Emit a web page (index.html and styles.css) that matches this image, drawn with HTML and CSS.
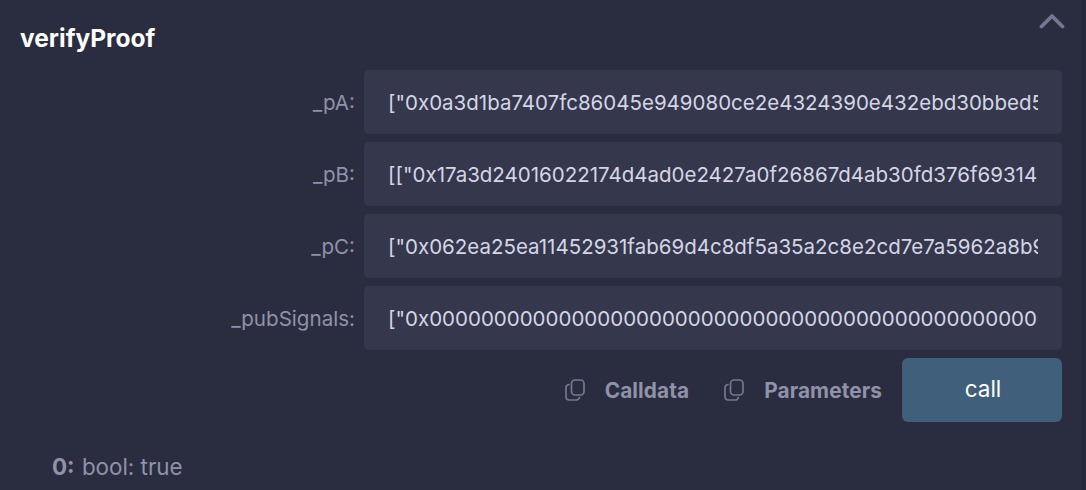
FILE: index.html
```html
<!DOCTYPE html>
<html lang="en">
<head>
<meta charset="utf-8">
<title>verifyProof</title>
<link rel="stylesheet" href="styles.css">
</head>
<body>
<main class="panel">
  <header class="head">
    <h1 class="title">verifyProof</h1>
    <svg class="chevron" viewBox="0 0 26 16" width="26" height="16" fill="none"><path d="M2.5 13.5 13 3l10.500 10.500" stroke="#737794" stroke-width="3.800" stroke-linecap="round" stroke-linejoin="round"/></svg>
  </header>
  <section class="fields">
    <label class="row"><span class="name">_pA:</span><input class="value" readonly value='["0x0a3d1ba7407fc86045e949080ce2e4324390e432ebd30bbed5'></label>
    <label class="row"><span class="name">_pB:</span><input class="value" readonly value='[["0x17a3d24016022174d4ad0e2427a0f26867d4ab30fd376f69314'></label>
    <label class="row"><span class="name">_pC:</span><input class="value" readonly value='["0x062ea25ea11452931fab69d4c8df5a35a2c8e2cd7e7a5962a8b9'></label>
    <label class="row"><span class="name">_pubSignals:</span><input class="value" readonly value='["0x0000000000000000000000000000000000000000000000000000000000000000'></label>
  </section>
  <div class="actions">
    <span class="copy"><svg class="copy-icon" viewBox="0 0 20 22" width="20" height="22" fill="none"><rect x="6.500" y="1" width="12.500" height="15" rx="3.500" stroke="#737794" stroke-width="1.700"/><path d="M4 5.500C2.200 5.800 1 7 1 8.800V17.500C1 19.500 2.500 21 4.500 21H11C12.800 21 14 20 14.400 18.500" stroke="#737794" stroke-width="1.700" stroke-linecap="round"/></svg><span class="copy-label">Calldata</span></span>
    <span class="copy"><svg class="copy-icon" viewBox="0 0 20 22" width="20" height="22" fill="none"><rect x="6.500" y="1" width="12.500" height="15" rx="3.500" stroke="#737794" stroke-width="1.700"/><path d="M4 5.500C2.200 5.800 1 7 1 8.800V17.500C1 19.500 2.500 21 4.500 21H11C12.800 21 14 20 14.400 18.500" stroke="#737794" stroke-width="1.700" stroke-linecap="round"/></svg><span class="copy-label">Parameters</span></span>
    <button class="call" type="button"><span class="call-label">call</span></button>
  </div>
  <p class="result"><strong class="index">0:</strong> bool: true</p>
</main>
</body>
</html>
```
FILE: styles.css
```css
html, body {
  margin: 0;
  height: 100%;
  background: #25273a;
}
body {
  font-family: Inter, "Liberation Sans", sans-serif;
  overflow: hidden;
}
.panel {
  box-sizing: border-box;
  width: 1082px;
  height: 490px;
  padding: 0 20px;
  background: #2a2c3f;
}
.head {
  display: flex;
  justify-content: space-between;
  align-items: flex-start;
  height: 70px;
}
.title {
  margin: 25px 0 0;
  font-size: 24.500px;
  line-height: 26px;
  font-weight: 700;
  color: #fff;
}
.chevron {
  margin: 13px -3px 0 0;
}
.fields {
  display: flex;
  flex-direction: column;
  gap: 8px;
}
.row {
  display: flex;
  justify-content: flex-end;
  align-items: center;
  gap: 9px;
}
.name {
  font-size: 20.600px;
  color: #8f92a9;
}
.value {
  box-sizing: border-box;
  width: 698px;
  height: 64px;
  padding: 0 24px;
  border: 0;
  border-radius: 5px;
  outline: 0;
  background: #35384c;
  color: #d4d6e6;
  font-family: inherit;
  font-size: 20.500px;
}
.actions {
  display: flex;
  justify-content: flex-end;
  align-items: center;
  margin-top: 8px;
}
.copy {
  display: flex;
  align-items: center;
  margin-right: 20px;
}
.copy + .copy {
  margin-left: 15px;
}
.copy-label {
  margin-left: 20px;
  font-size: 20.800px;
  font-weight: 700;
  letter-spacing: 0.1px;
  color: #8f92a9;
}
.call {
  display: flex;
  align-items: center;
  justify-content: center;
  width: 160px;
  height: 64px;
  padding: 0 0 3px 2px;
  border: 0;
  border-radius: 6px;
  background: #3f5f7b;
  color: #fff;
  font-family: inherit;
  font-size: 22.500px;
}
.result {
  margin: 32px 0 0 32px;
  font-size: 22.400px;
  line-height: 26px;
  color: #8f92a9;
}
.index {
  font-weight: 700;
  margin-right: 1px;
}
```
